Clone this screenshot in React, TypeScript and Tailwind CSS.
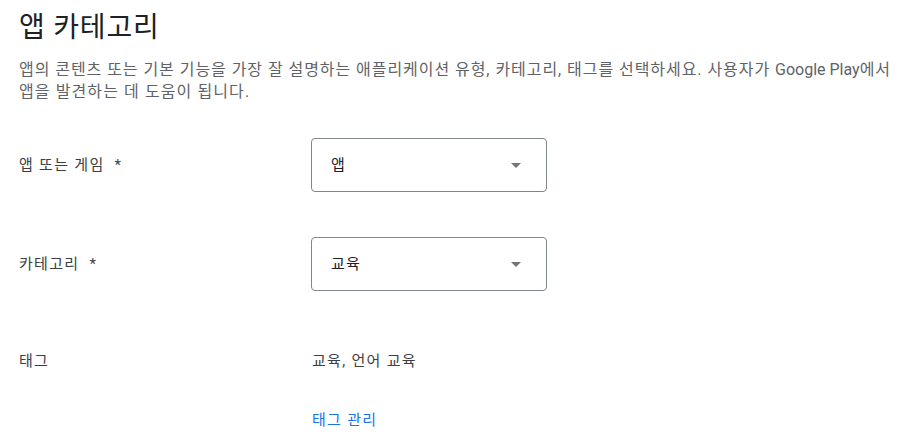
import React from "react";

const font = { fontFamily: "Roboto, 'Noto Sans CJK KR', sans-serif" };

function Select({ value }: { value: string }) {
  return (
    <div className="flex h-[54px] w-[236px] items-center justify-between rounded-[4px] border border-[#80868b] pl-[19px] pr-[25px]">
      <span className="text-[15px] tracking-[1.3px] text-[#202124]">{value}</span>
      <span className="h-0 w-0 border-x-[5px] border-t-[5px] border-x-transparent border-t-[#757575]" />
    </div>
  );
}

export default function App() {
  return (
    <div className="min-h-[445px] w-[920px] bg-white px-[19px] pt-[10px]" style={font}>
      <h1 className="text-[28px] leading-[36px] tracking-[0.8px] text-[#202124]">앱 카테고리</h1>
      <p className="mt-[13px] text-[16px] leading-[22px] tracking-[1.1px] text-[#5f6368]">
        <span className="whitespace-nowrap tracking-[0.95px]">
          앱의 콘텐츠 또는 기본 기능을 가장 잘 설명하는 애플리케이션 유형, 카테고리, 태그를 선택하세요. 사용자가{" "}
          <span className="tracking-normal">Google Play</span>에서
        </span>
        <br />
        앱을 발견하는 데 도움이 됩니다.
      </p>

      <div className="mt-[35px] flex flex-col gap-[45px] text-[15px] tracking-[1.3px] text-[#3c4043]">
        <div className="flex items-center">
          <div className="w-[292px]">앱 또는 게임 &nbsp;*</div>
          <Select value="앱" />
        </div>
        <div className="flex items-center">
          <div className="w-[292px]">카테고리 &nbsp;*</div>
          <Select value="교육" />
        </div>
      </div>

      <div className="mt-[59px] flex text-[15px] tracking-[1.3px] text-[#3c4043]">
        <div className="w-[293px]">태그</div>
        <div className="flex flex-col">
          <span>교육, 언어 교육</span>
          <a className="mt-[36px] text-[#1a73e8]">태그 관리</a>
        </div>
      </div>
    </div>
  );
}
